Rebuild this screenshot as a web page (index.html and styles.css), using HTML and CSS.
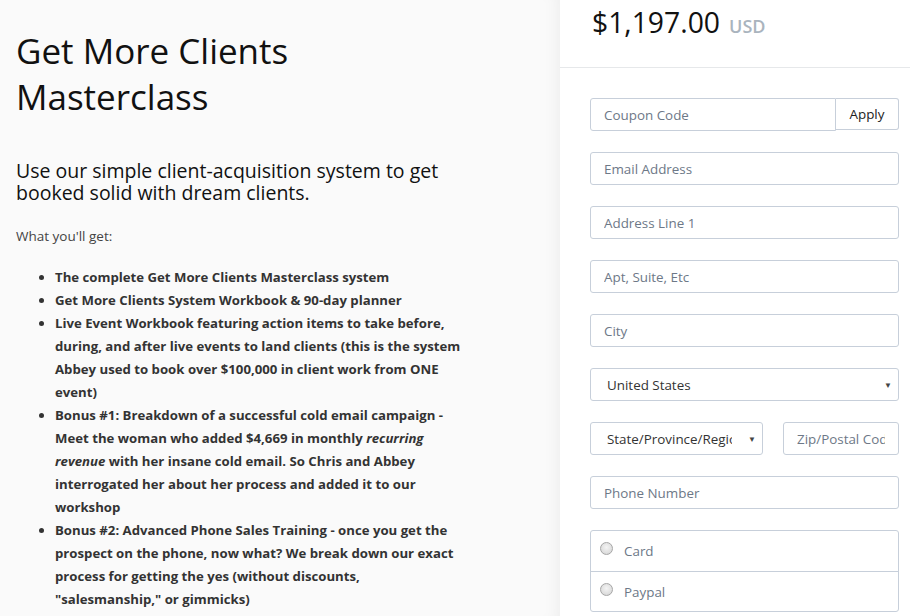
FILE: index.html
```html
<!DOCTYPE html>
<html>
<head>
<meta charset="utf-8">
<link rel="stylesheet" href="styles.css">
</head>
<body>
<div class="page">
  <main class="info">
    <h1 class="title">Get More Clients Masterclass</h1>
    <h3 class="subtitle">Use our simple client-acquisition system to get booked solid with dream clients.</h3>
    <p class="lead">What you'll get:</p>
    <ul class="perks">
      <li>The complete Get More Clients Masterclass system</li>
      <li>Get More Clients System Workbook &amp; 90-day planner</li>
      <li>Live Event Workbook featuring action items to take before, during, and after live events to land clients (this is the system Abbey used to book over $100,000 in client work from ONE event)</li>
      <li>Bonus #1: Breakdown of a successful cold email campaign - Meet the woman who added $4,669 in monthly <em>recurring revenue</em> with her insane cold email. So Chris and Abbey interrogated her about her process and added it to our workshop</li>
      <li>Bonus #2: Advanced Phone Sales Training - once you get the prospect on the phone, now what? We break down our exact process for getting the yes (without discounts, "salesmanship," or gimmicks)</li>
    </ul>
  </main>
  <aside class="checkout">
    <div class="price-head">
      <span class="price">$1,197.00</span>
      <span class="currency">USD</span>
    </div>
    <form class="form">
      <div class="coupon">
        <input class="field coupon-input" type="text" placeholder="Coupon Code">
        <button class="apply" type="button">Apply</button>
      </div>
      <input class="field" type="text" placeholder="Email Address">
      <input class="field" type="text" placeholder="Address Line 1">
      <input class="field" type="text" placeholder="Apt, Suite, Etc">
      <input class="field" type="text" placeholder="City">
      <div class="select-wrap">
        <select class="field select"><option>United States</option></select>
        <span class="arrow">&#9660;</span>
      </div>
      <div class="split">
        <div class="select-wrap state">
          <select class="field select"><option>State/Province/Region</option></select>
          <span class="arrow">&#9660;</span>
        </div>
        <input class="field zip" type="text" placeholder="Zip/Postal Code">
      </div>
      <input class="field" type="text" placeholder="Phone Number">
      <div class="payment">
        <label class="pay-row"><input type="radio" name="pay" class="radio"><span>Card</span></label>
        <label class="pay-row"><input type="radio" name="pay" class="radio"><span>Paypal</span></label>
      </div>
    </form>
  </aside>
</div>
</body>
</html>
```
FILE: styles.css
```css
* { box-sizing: border-box; }
html, body { margin: 0; padding: 0; }
body {
  font-family: "Open Sans", "Noto Sans", sans-serif;
  color: #333;
  background: #fff;
  overflow: hidden;
}
.page {
  display: flex;
  height: 616px;
}
.info {
  width: 560px;
  flex: none;
  background: #fafafa;
  box-shadow: inset -14px 0 16px -12px rgba(0,0,0,0.06);
  padding: 28px 99px 0 16px;
}
.title {
  margin: 0;
  font-size: 35px;
  font-weight: 400;
  line-height: 46px;
  color: #111;
}
.subtitle {
  margin: 40px 0 0;
  font-size: 19.5px;
  font-weight: 400;
  line-height: 22px;
  color: #111;
}
.lead {
  margin: 23px 0 0;
  font-size: 13.5px;
  line-height: 18px;
  color: #444;
}
.perks {
  margin: 21px 0 0;
  padding-left: 39px;
  font-size: 13.2px;
  font-weight: 700;
  line-height: 23px;
  color: #333;
}
.checkout {
  flex: 1;
  background: #fff;
}
.price-head {
  height: 68px;
  border-bottom: 1px solid #e6e8ea;
  padding: 3px 0 0 32px;
  display: flex;
  align-items: baseline;
  gap: 9px;
}
.price {
  font-size: 28.3px;
  color: #111;
}
.currency {
  font-size: 18px;
  font-weight: 600;
  color: #aab4be;
}
.form {
  padding: 30px 11px 0 30px;
  display: flex;
  flex-direction: column;
  gap: 21px;
}
.field {
  display: block;
  width: 100%;
  height: 33px;
  border: 1px solid #c7cfda;
  border-radius: 3px;
  padding: 0 13px;
  font-family: inherit;
  font-size: 13.4px;
  color: #333;
  background: #fff;
  outline: none;
}
.field::placeholder { color: #6d7887; }
.coupon { display: flex; }
.coupon-input {
  flex: 1;
  border-radius: 3px 0 0 3px;
}
.apply {
  width: 63px;
  height: 32px;
  border: 1px solid #c7cfda;
  border-left: none;
  border-radius: 0 3px 3px 0;
  background: #fff;
  font-family: inherit;
  font-size: 13.4px;
  color: #222;
  padding: 0;
}
.select-wrap { position: relative; }
.select {
  appearance: none;
  -webkit-appearance: none;
  padding: 0 30px 0 16px;
  color: #333;
}
.arrow {
  position: absolute;
  right: 7px;
  top: 11px;
  font-size: 8px;
  color: #444;
  pointer-events: none;
}
.split {
  display: flex;
  gap: 20px;
}
.state { width: 173px; flex: none; }
.zip { flex: 1; }
.payment {
  border: 1px solid #c7cfda;
  border-radius: 3px;
}
.pay-row {
  display: flex;
  align-items: center;
  height: 40px;
  padding-left: 9px;
  font-size: 13.4px;
  color: #6d7887;
}
.pay-row + .pay-row { border-top: 1px solid #c7cfda; }
.radio {
  appearance: none;
  -webkit-appearance: none;
  margin: 0 11px 5px 0;
  width: 13px;
  height: 13px;
  border-radius: 50%;
  border: 1px solid #a6a6a6;
  background: radial-gradient(circle at 50% 40%, #f4f4f4 0%, #dcdcdc 70%, #cfcfcf 100%);
}
```
